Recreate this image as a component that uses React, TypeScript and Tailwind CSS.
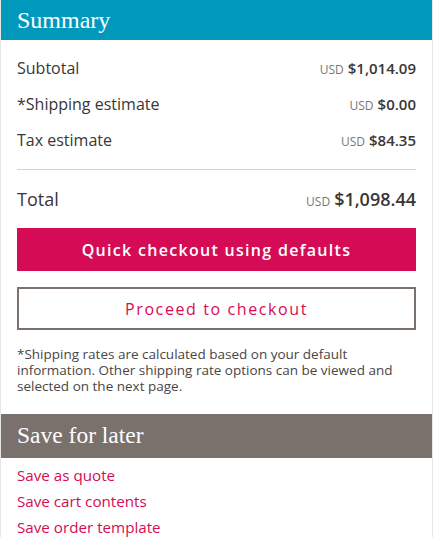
import React from "react";

const ROWS = [
  { label: "Subtotal", amount: "$1,014.09" },
  { label: "*Shipping estimate", amount: "$0.00" },
  { label: "Tax estimate", amount: "$84.35" },
];

const SAVE_LINKS = ["Save as quote", "Save cart contents", "Save order template"];

function Amount({ value, big }: { value: string; big?: boolean }) {
  return (
    <span className="flex items-baseline gap-[4px]">
      <span className="text-[12px] text-[#777]">USD</span>
      <span className={big ? "text-[18px] font-semibold text-[#3a3636]" : "text-[15px] font-semibold text-[#3a3636]"}>{value}</span>
    </span>
  );
}

export default function App() {
  const sans = { fontFamily: '"Open Sans", "Noto Sans", sans-serif' };
  const serif = { fontFamily: '"Liberation Serif", serif' };
  return (
    <div className="h-[537px] w-[433px] overflow-hidden border-x border-[#e6e6e6] bg-white" style={sans}>
      <h2 className="flex h-[40px] items-center bg-[#0099bc] px-[16px] text-[24px] text-white" style={serif}>
        Summary
      </h2>

      <div className="px-[16px] pt-[10px]">
        {ROWS.map((r) => (
          <div key={r.label} className="flex h-[36px] items-center justify-between text-[16px] text-[#3a3636]">
            <span>{r.label}</span>
            <Amount value={r.amount} />
          </div>
        ))}
        <div className="mt-[11px] border-t border-[#d4d4d4]" />
        <div className="flex h-[58px] items-center justify-between text-[18px] text-[#3a3636]">
          <span>Total</span>
          <Amount value="$1,098.44" big />
        </div>

        <button
          type="button"
          className="flex h-[43px] w-full items-center justify-center bg-[#d50c55] text-[16px] font-semibold tracking-[1.3px] text-white"
        >
          Quick checkout using defaults
        </button>
        <button
          type="button"
          className="mt-[16px] flex h-[43px] w-full items-center justify-center border-2 border-[#7b716c] bg-white text-[16px] tracking-[1.6px] text-[#d50c55]"
        >
          Proceed to checkout
        </button>

        <p className="mt-[16px] text-[13.5px] leading-[16px] text-[#4a4545]">
          *Shipping rates are calculated based on your default information. Other shipping rate options can be viewed and selected on the next page.
        </p>
      </div>

      <h2 className="mt-[20px] flex h-[44px] items-center bg-[#7b716c] px-[16px] text-[23.5px] text-white" style={serif}>
        Save for later
      </h2>
      <ul className="px-[16px] pt-[4px]">
        {SAVE_LINKS.map((l) => (
          <li key={l} className="h-[26px] text-[15.2px] leading-[26px] text-[#d50c55]">
            <a href="#">{l}</a>
          </li>
        ))}
      </ul>
    </div>
  );
}
